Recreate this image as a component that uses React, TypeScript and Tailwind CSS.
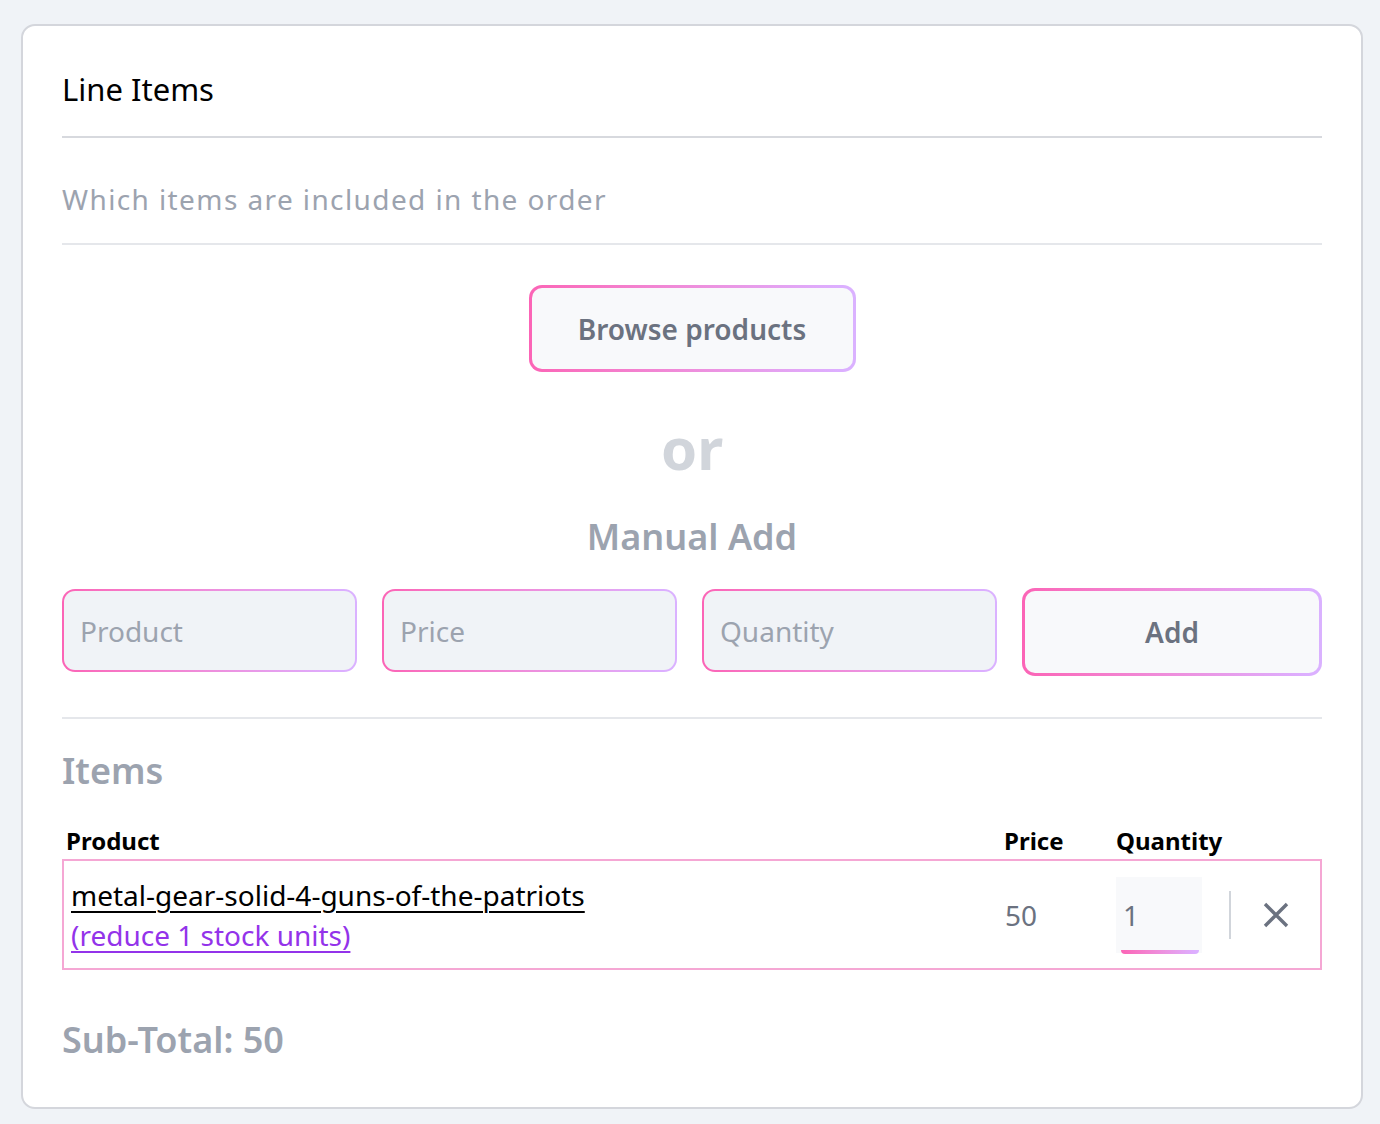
import React from "react";

function GradBox({ children, className = "", inner = "", }: { children: React.ReactNode; className?: string; inner?: string }) {
  return (
    <div className={`bg-gradient-to-r from-pink-400 to-purple-300 ${className}`}>
      <div className={`w-full h-full ${inner}`}>{children}</div>
    </div>
  );
}

export default function App() {
  return (
    <div className="min-h-[1124px] bg-[#f0f3f7] pt-[24px] pl-[21px] pb-[16px]" style={{ fontFamily: '"Noto Sans", "Open Sans", sans-serif' }}>
      <div className="w-[1342px] bg-white border-2 border-[#d4d6dc] rounded-[14px] px-[39px] pt-[37px] pb-[43px]">
        <h1 className="text-[31px] leading-[52px] text-black pb-[21px] border-b-2 border-[#d7d9de]">Line Items</h1>
        <p className="text-[28px] leading-[40px] text-[#9ca3af] tracking-[0.05em] pt-[41px] pb-[24px] border-b-2 border-[#e5e7eb]">
          Which items are included in the order
        </p>
        <div className="flex justify-center pt-[40px]">
          <GradBox className="w-[327px] h-[87px] p-[3px] rounded-[13px]" inner="rounded-[10px] bg-[#f8f9fb] flex items-center justify-center">
            <span className="text-[28px] font-semibold text-[#6b7280]">Browse products</span>
          </GradBox>
        </div>
        <div className="text-center text-[58px] font-bold text-[#d1d5db] leading-[80px] mt-[36px]">or</div>
        <div className="text-center text-[36px] font-semibold text-[#9ca3af] leading-[48px] mt-[25px]">Manual Add</div>
        <div className="flex gap-[25px] items-start mt-[28px] h-[83px]">
          {["Product", "Price", "Quantity"].map((p) => (
            <GradBox key={p} className="w-[295px] h-[83px] p-[2px] rounded-[13px]" inner="rounded-[11px] bg-[#f0f3f7] flex items-center px-[16px]">
              <span className="text-[28px] text-[#9ca3af]">{p}</span>
            </GradBox>
          ))}
          <GradBox className="flex-1 h-[88px] -mt-[1px] p-[3px] rounded-[13px]" inner="rounded-[10px] bg-[#f8f9fb] flex items-center justify-center">
            <span className="text-[28px] font-semibold text-[#6b7280]">Add</span>
          </GradBox>
        </div>
        <div className="border-t-2 border-[#e5e7eb] mt-[45px]" />
        <h2 className="text-[36px] font-semibold text-[#9ca3af] leading-[48px] mt-[28px]">Items</h2>
        <div className="flex items-end text-[24px] font-bold text-black leading-[32px] mt-[30px] mb-[2px] pl-[4px]">
          <div className="flex-1">Product</div>
          <div className="w-[112px]">Price</div>
          <div className="w-[206px]">Quantity</div>
        </div>
        <div className="border-2 border-[#f5a7d4] flex items-center h-[111px] pl-[7px]">
          <div className="flex-1 flex flex-col items-start">
            <a className="text-[28px] text-black underline underline-offset-[5px] decoration-[2px] leading-[40px]">metal-gear-solid-4-guns-of-the-patriots</a>
            <a className="text-[28px] text-[#9333ea] underline underline-offset-[5px] decoration-[2px] leading-[40px]">(reduce 1 stock units)</a>
          </div>
          <div className="w-[111px] text-[28px] text-[#6b7280] -ml-[2px] pr-[2px]">50</div>
          <div className="w-[86px] h-[76px] bg-[#f8f9fb] relative flex items-center pl-[7px]">
            <span className="text-[28px] text-[#6b7280]">1</span>
            <div className="absolute left-[5px] right-[3px] bottom-[-1px] h-[4px] rounded-b-full bg-gradient-to-r from-pink-400 to-purple-300" />
          </div>
          <div className="w-[2px] h-[48px] bg-[#d1d5db] ml-[27px]" />
          <div className="w-[89px] flex items-center justify-center">
            <svg width="26" height="26" viewBox="0 0 26 26" fill="none" stroke="#6b7280" strokeWidth="3.4">
              <path d="M2 2 L24 24 M24 2 L2 24" />
            </svg>
          </div>
        </div>
        <div className="text-[36px] font-semibold text-[#9ca3af] leading-[48px] mt-[46px]">Sub-Total: 50</div>
      </div>
    </div>
  );
}
